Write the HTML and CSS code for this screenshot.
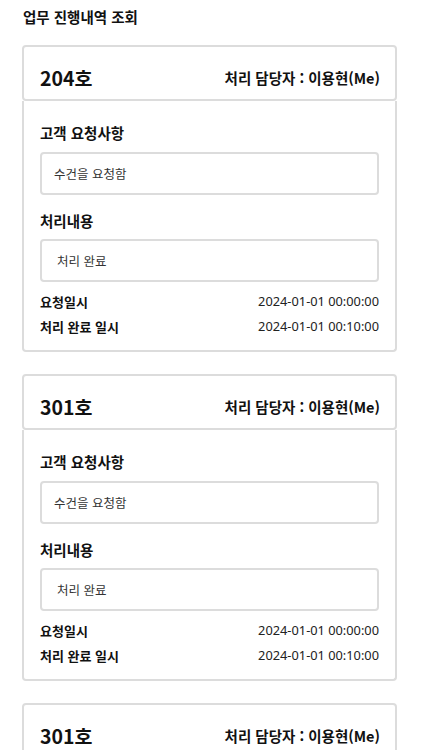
FILE: index.html
```html
<!DOCTYPE html>
<html lang="ko">
<head>
<meta charset="utf-8">
<title>업무 진행내역 조회</title>
<link rel="stylesheet" href="styles.css">
</head>
<body>
<main class="page">
  <h1 class="page-title">업무 진행내역 조회</h1>

  <section class="card">
    <div class="card-head">
      <span class="room">204호</span>
      <span class="manager">처리 담당자 : 이용현(Me)</span>
    </div>
    <div class="card-body">
      <h2 class="label">고객 요청사항</h2>
      <div class="field">수건을 요청함</div>
      <h2 class="label">처리내용</h2>
      <div class="field field-result">처리 완료</div>
      <div class="rows">
        <div class="row"><span class="row-key">요청일시</span><span class="row-val">2024-01-01 00:00:00</span></div>
        <div class="row"><span class="row-key">처리 완료 일시</span><span class="row-val">2024-01-01 00:10:00</span></div>
      </div>
    </div>
  </section>

  <section class="card">
    <div class="card-head">
      <span class="room">301호</span>
      <span class="manager">처리 담당자 : 이용현(Me)</span>
    </div>
    <div class="card-body">
      <h2 class="label">고객 요청사항</h2>
      <div class="field">수건을 요청함</div>
      <h2 class="label">처리내용</h2>
      <div class="field field-result">처리 완료</div>
      <div class="rows">
        <div class="row"><span class="row-key">요청일시</span><span class="row-val">2024-01-01 00:00:00</span></div>
        <div class="row"><span class="row-key">처리 완료 일시</span><span class="row-val">2024-01-01 00:10:00</span></div>
      </div>
    </div>
  </section>

  <section class="card">
    <div class="card-head">
      <span class="room">301호</span>
      <span class="manager">처리 담당자 : 이용현(Me)</span>
    </div>
    <div class="card-body">
      <h2 class="label">고객 요청사항</h2>
      <div class="field">수건을 요청함</div>
      <h2 class="label">처리내용</h2>
      <div class="field field-result">처리 완료</div>
      <div class="rows">
        <div class="row"><span class="row-key">요청일시</span><span class="row-val">2024-01-01 00:00:00</span></div>
        <div class="row"><span class="row-key">처리 완료 일시</span><span class="row-val">2024-01-01 00:10:00</span></div>
      </div>
    </div>
  </section>
</main>
</body>
</html>
```

FILE: styles.css
```css
* { box-sizing: border-box; }

html, body {
  margin: 0;
  padding: 0;
  background: #ffffff;
}

body {
  font-family: "Noto Sans CJK KR", "Noto Sans", sans-serif;
  color: #111111;
}

.page {
  width: 375px;
  margin-left: 22px;
  padding-top: 7px;
  padding-bottom: 40px;
}

.page-title {
  margin: 0 0 18px 1px;
  font-size: 14.5px;
  line-height: 20px;
  font-weight: 700;
}

.card {
  margin-bottom: 22px;
}

.card-head {
  display: flex;
  justify-content: space-between;
  align-items: center;
  height: 56px;
  padding: 9px 15px 0 16px;
  border: 2px solid #dcdcdc;
  border-radius: 4px;
}

.room {
  font-size: 19.5px;
  font-weight: 700;
  line-height: 24px;
}

.manager {
  font-size: 14.5px;
  font-weight: 700;
  line-height: 20px;
}

.card-body {
  padding: 22px 16px 15px 16px;
  border: 2px solid #dcdcdc;
  border-top: 0;
  border-radius: 0 0 4px 4px;
}

.label {
  margin: 0;
  font-size: 14.5px;
  line-height: 20px;
  font-weight: 700;
}

.field {
  height: 43px;
  margin: 9px 0 16px 0;
  padding: 0 12px;
  display: flex;
  align-items: center;
  border: 2px solid #dcdcdc;
  border-radius: 4px;
  font-size: 12.5px;
  color: #333333;
}

.field-result {
  margin: 8px 0 10px 0;
  padding-left: 15px;
}

.rows {
  display: flex;
  flex-direction: column;
  gap: 7px;
}

.row {
  display: flex;
  justify-content: space-between;
  align-items: center;
  height: 18px;
}

.row-key {
  font-size: 13px;
  font-weight: 700;
}

.row-val {
  font-family: "Noto Sans", "Noto Sans CJK KR", sans-serif;
  font-size: 12.8px;
  color: #222222;
}
```
